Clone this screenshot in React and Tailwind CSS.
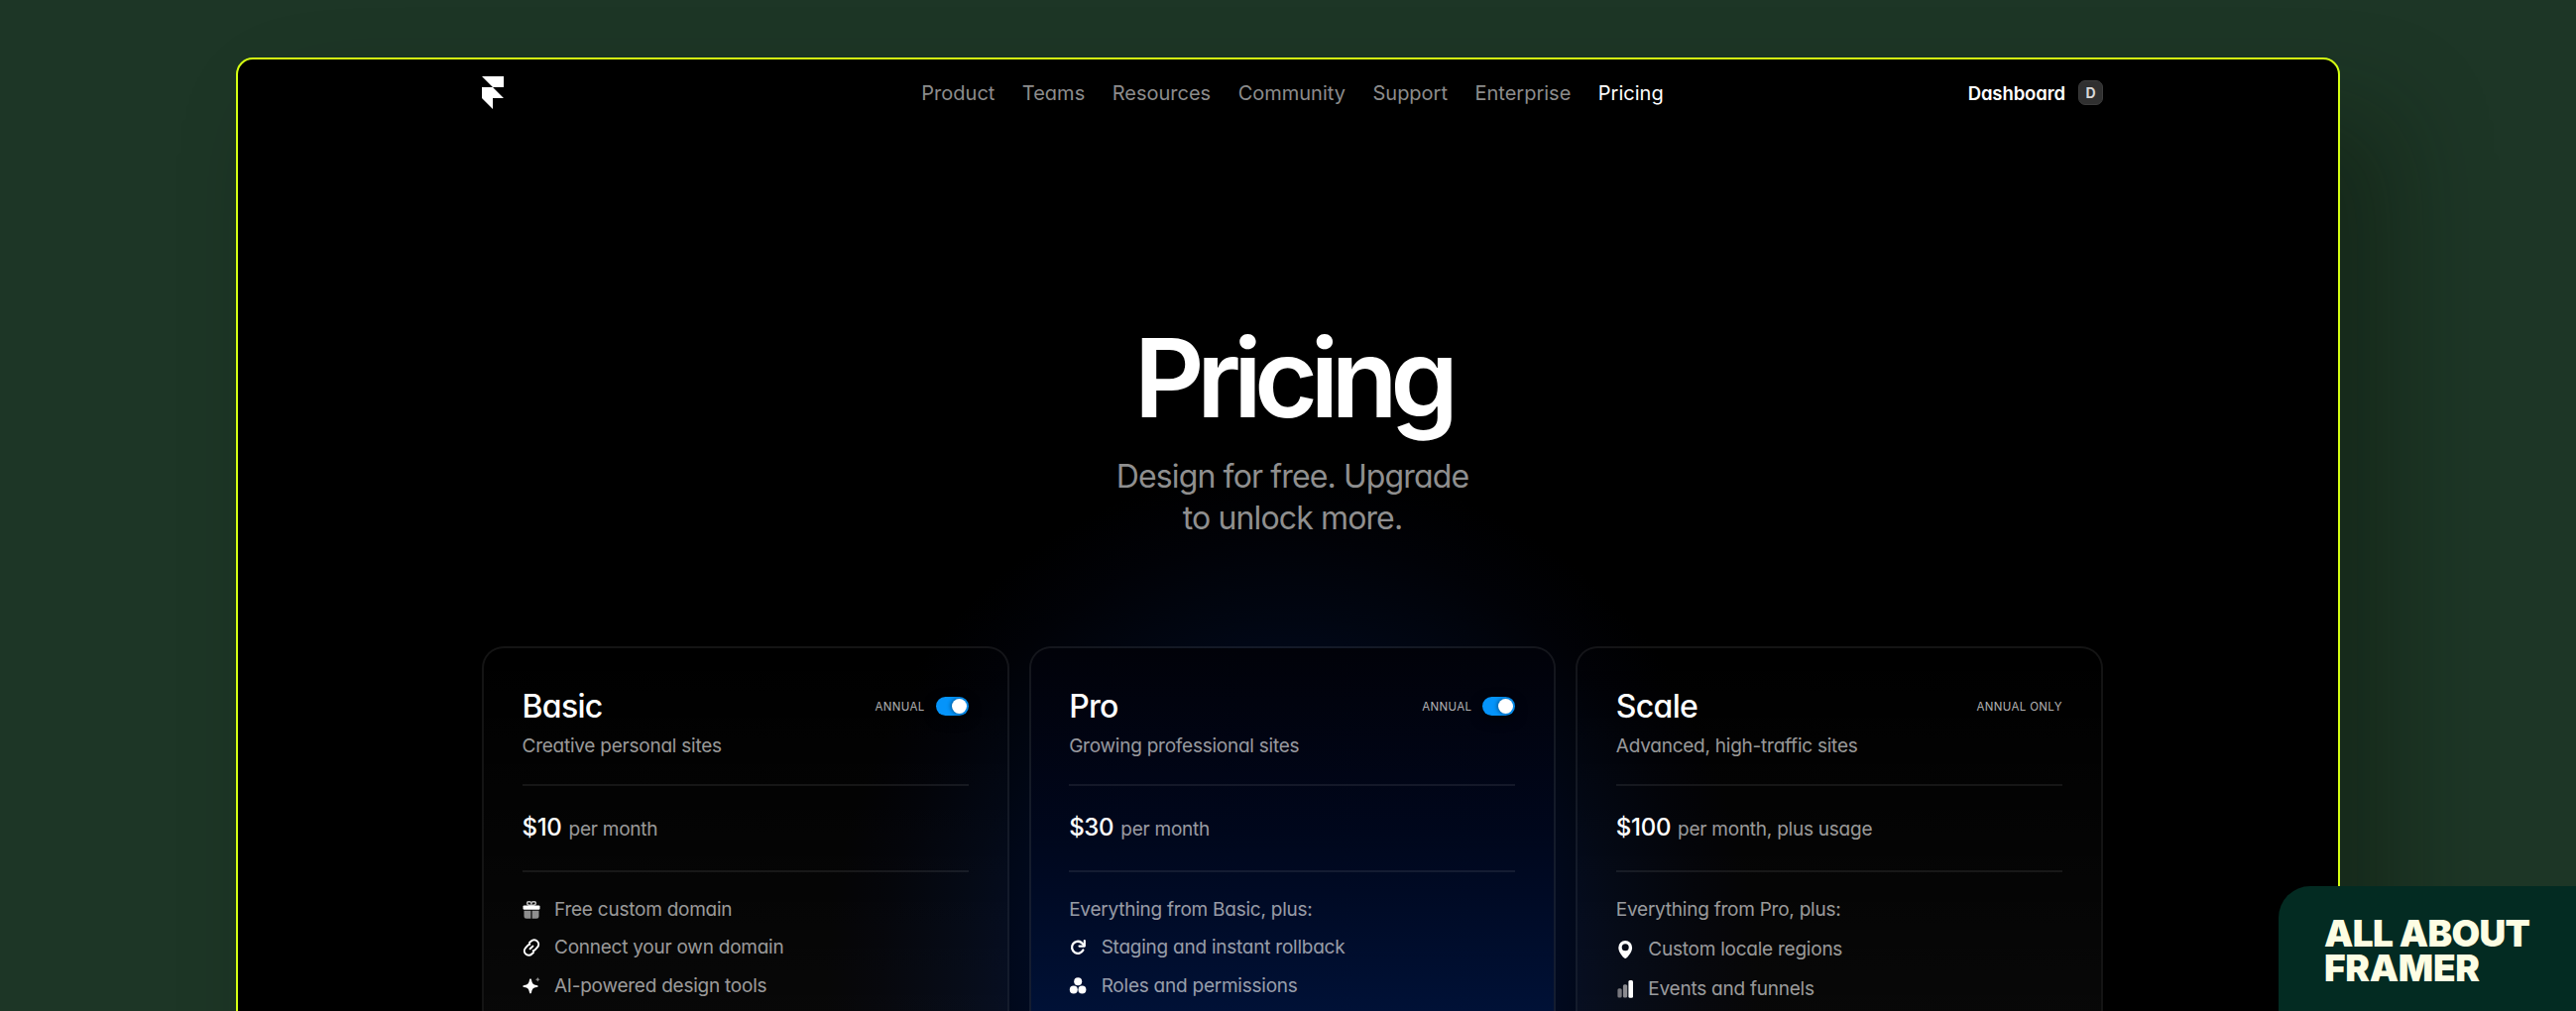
import React from "react";

function FramerMark() {
  return (
    <svg viewBox="0 0 22 33" className="h-[33px] w-[22px] fill-white" aria-hidden="true">
      <path d="M0 0h22v11H11zM0 11h11l11 11H11v11L0 22z" />
    </svg>
  );
}

function Icon({ children }) {
  return (
    <svg viewBox="0 0 18 18" className="size-[18px] shrink-0" fill="none" aria-hidden="true">
      {children}
    </svg>
  );
}

const GiftIcon = () => (
  <Icon>
    <path d="M8.8 4.2C7 4.4 4.6 4.2 4.6 2.3 4.6.3 8.2-.2 8.9 2.6 9.6-.2 13.4.3 13.4 2.3c0 1.9-2.6 2.1-4.6 1.9z" stroke="#b5b5b5" strokeWidth="1.6" />
    <path d="M8.9 1.5v3" stroke="#b5b5b5" strokeWidth="1.2" />
    <rect x="0.5" y="4.4" width="17" height="4.4" rx="1.2" fill="#fff" />
    <path d="M1.5 9.8h6.9v8H4a2.5 2.5 0 0 1-2.5-2.5zM9.6 9.8h6.9v5.5a2.5 2.5 0 0 1-2.5 2.5H9.6z" fill="#8f8f8f" />
  </Icon>
);

const LinkIcon = () => (
  <Icon>
    <g stroke="#fff" strokeWidth="2" strokeLinecap="round">
      <path d="M7 4 8.7 2.5a4.3 4.3 0 0 1 6.2.1 4.3 4.3 0 0 1 .1 6l-2.3 2.5a4.3 4.3 0 0 1-2 1.2" />
      <path d="M11 14 9.3 15.500a4.3 4.3 0 0 1-6.2-.1 4.3 4.3 0 0 1-.1-6l2.3-2.500a4.3 4.3 0 0 1 2-1.200" />
      <path d="m7.6 10.3 2.8-2.7" />
    </g>
  </Icon>
);

const SparkleIcon = () => (
  <Icon>
    <path d="M8 1.6c.7 0 .9.4 1.1 1.3.7 3.4 1.5 4.3 5.1 5 .9.2 1.4.4 1.4 1.1s-.5.9-1.4 1.1c-3.6.7-4.4 1.6-5.1 5-.2.9-.4 1.3-1.1 1.3s-.9-.4-1.1-1.3c-.7-3.4-1.5-4.3-5.1-5C.9 9.9.4 9.7.4 9s.5-.9 1.4-1.1c3.6-.7 4.400-1.6 5.1-5C7.1 2 7.3 1.6 8 1.6z" fill="#fff" />
    <path d="m15.3 0 .8 1.4 1.500.8-1.500.8-.8 1.5-.8-1.5-1.500-.8 1.500-.8z" fill="#8a8a8a" />
  </Icon>
);

const RedoIcon = () => (
  <Icon>
    <path d="M14.4 11.5A6 6 0 1 1 12.7 4l2 2" stroke="#fff" strokeWidth="2.3" strokeLinecap="round" />
    <path d="M15.8 2v5.6h-5.3" stroke="#fff" strokeWidth="2.2" strokeLinecap="round" strokeLinejoin="round" />
  </Icon>
);

const RolesIcon = () => (
  <Icon>
    <circle cx="9.2" cy="4.3" r="4" fill="#fff" />
    <circle cx="4.8" cy="12.5" r="4" fill="#fff" />
    <circle cx="13.4" cy="12.5" r="4" fill="#fff" />
  </Icon>
);

const PinIcon = () => (
  <Icon>
    <path fillRule="evenodd" d="M9.2 0a6.9 6.9 0 0 1 6.9 6.9c0 4-3.1 8-5.5 10.4a2 2 0 0 1-2.8 0C5.4 14.9 2.3 10.9 2.3 6.9A6.9 6.9 0 0 1 9.2 0zm0 3.3a3.5 3.5 0 1 0 0 7 3.5 3.5 0 0 0 0-7z" fill="#fff" />
  </Icon>
);

const BarsIcon = () => (
  <Icon>
    <rect x="1.4" y="8.2" width="4.3" height="9.3" rx="1.5" fill="#77777d" />
    <rect x="6.9" y="4.2" width="4.3" height="13.3" rx="1.5" fill="#8b8b90" />
    <rect x="12.4" y="0" width="4.6" height="17.8" rx="1.5" fill="#fff" />
  </Icon>
);

function Toggle() {
  return (
    <span className="flex h-[19.5px] w-[33px] items-center justify-end rounded-full bg-[#0594fa] pr-[2px] shadow-[0_4px_12px_rgba(0,0,0,0.5)]">
      <span className="size-[15px] rounded-full bg-white shadow-[-1px_0_4px_rgba(0,0,0,0.45)]" />
    </span>
  );
}

const links = ["Product", "Teams", "Resources", "Community", "Support", "Enterprise", "Pricing"];

const plans = [
  {
    name: "Basic",
    tagline: "Creative personal sites",
    toggle: true,
    price: "$10",
    unit: "per month",
    features: [
      [GiftIcon, "Free custom domain"],
      [LinkIcon, "Connect your own domain"],
      [SparkleIcon, "AI-powered design tools"],
    ],
    skin: "bg-linear-to-b from-white/0 to-white/[0.035]",
    list: "gap-[10.7px]",
  },
  {
    name: "Pro",
    tagline: "Growing professional sites",
    toggle: true,
    price: "$30",
    unit: "per month",
    intro: "Everything from Basic, plus:",
    features: [
      [RedoIcon, "Staging and instant rollback"],
      [RolesIcon, "Roles and permissions"],
    ],
    skin: "bg-linear-to-b from-[#010209] via-[#00071c] via-45% to-[#00143e]",
    list: "gap-[10.7px]",
  },
  {
    name: "Scale",
    tagline: "Advanced, high-traffic sites",
    price: "$100",
    unit: "per month, plus usage",
    intro: "Everything from Pro, plus:",
    features: [
      [PinIcon, "Custom locale regions"],
      [BarsIcon, "Events and funnels"],
    ],
    skin: "bg-linear-to-b from-white/0 to-white/[0.035]",
    list: "gap-3",
  },
];

function PlanCard({ plan }) {
  return (
    <article className={`h-[420px] rounded-[22px] border-2 border-white/[0.08] bg-clip-padding pt-[38.5px] pr-[39px] pl-[38.5px] text-[19px] leading-7 tracking-[-0.24px] text-white/60 ${plan.skin}`}>
      <header className="flex h-10 items-center justify-between">
        <h2 className="text-[32px] leading-10 font-medium tracking-[-0.7px] text-white">{plan.name}</h2>
        <div className="flex items-center gap-[11px]">
          <span className="text-[11.5px] leading-4 tracking-[0.35px] text-white/70">{plan.toggle ? "ANNUAL" : "ANNUAL ONLY"}</span>
          {plan.toggle && <Toggle />}
        </div>
      </header>
      <p className="mt-1.5">{plan.tagline}</p>
      <div className="mt-6 flex h-[89px] items-baseline gap-[7px] border-y-2 border-white/[0.08] pt-[25px]">
        <span className="text-[24px] leading-[34px] font-medium tracking-[-0.3px] text-white">{plan.price}</span>
        <span>{plan.unit}</span>
      </div>
      <ul className={`mt-6 flex flex-col ${plan.list}`}>
        {plan.intro && <li>{plan.intro}</li>}
        {plan.features.map(([Glyph, label]) => (
          <li key={label} className="flex items-center gap-[14.5px]">
            <Glyph />
            {label}
          </li>
        ))}
      </ul>
    </article>
  );
}

export default function App() {
  return (
    <div className="relative h-[1020px] w-[2598px] overflow-hidden bg-[#1d3626] pt-[58px] pl-[238px] font-['Inter',sans-serif] [font-feature-settings:'cv11']">
      <main className="h-[1062px] w-[2122px] rounded-[17px] border-2 border-[#d5ff12] bg-black bg-[radial-gradient(ellipse_480px_520px_at_1063px_930px,#021036_0%,#010c28_45%,#010612_70%,#010207_86%,#000_100%)] pl-[246px] shadow-[50px_60px_100px_rgba(10,20,8,0.4)]">
        <div className="w-[1635px]">
          <header className="grid h-[67px] grid-cols-[1fr_auto_1fr] items-center">
            <FramerMark />
            <nav className="flex gap-[27.5px] text-[20px] leading-7 text-[#8c8c8c]">
              {links.map((label) => (
                <a key={label} className={label === "Pricing" ? "text-white" : ""}>{label}</a>
              ))}
            </nav>
            <div className="flex items-center justify-end gap-[13px]">
              <span className="text-[18.5px] leading-7 font-semibold tracking-[-0.1px] text-white">Dashboard</span>
              <span className="grid size-[25px] place-items-center rounded-[7px] border border-[#3c3c3c] bg-[#303030] text-[14px] leading-none font-bold text-[#d8d8d8]">D</span>
            </div>
          </header>
          <section className="mt-[199px] text-center">
            <h1 className="text-[110px] leading-[110px] font-semibold tracking-[-7.7px] text-white">Pricing</h1>
            <p className="mt-6 text-[32px] leading-[42px] tracking-[-0.87px] text-[#8f8f8f]">
              Design for free. Upgrade
              <br />
              to unlock more.
            </p>
          </section>
          <section className="mt-[108px] grid grid-cols-3 gap-5">
            {plans.map((plan) => (
              <PlanCard key={plan.name} plan={plan} />
            ))}
          </section>
        </div>
      </main>
      <aside className="absolute right-0 bottom-0 h-[126px] w-[300px] rounded-tl-[32px] bg-[#032b22] pt-[29.5px] pl-[46px] text-[37px] leading-[35px] font-black tracking-[-0.7px] text-[#fdfde3]">
        <p>ALL ABOUT</p>
        <p className="tracking-[-0.3px]">FRAMER</p>
      </aside>
    </div>
  );
}
